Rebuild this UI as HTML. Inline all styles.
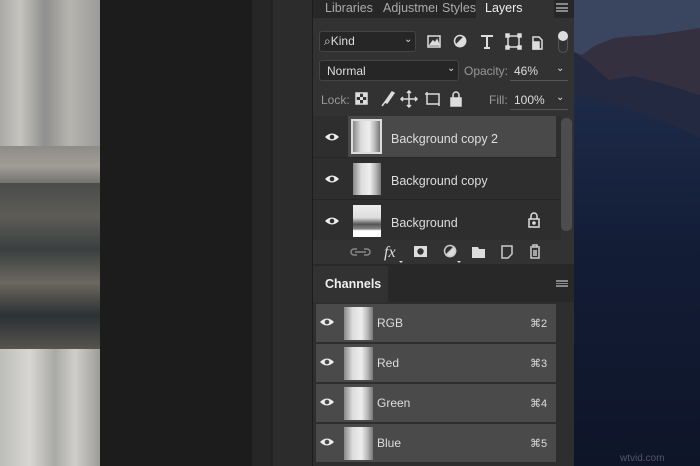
<!DOCTYPE html>
<html><head><meta charset="utf-8"><style>
*{margin:0;padding:0;box-sizing:border-box}
body{width:700px;height:466px;overflow:hidden;position:relative;background:#1c1c1c;font-family:"Liberation Sans",sans-serif;color:#ddd}
.a{position:absolute}
.t{font-size:12px;color:#ddd}
.thumb{position:absolute;background:linear-gradient(90deg,#888,#ddd 30%,#eee 60%,#bbb 80%,#777)}
.ch{position:absolute;left:316px;width:240px;height:38px;background:#4a4a4a}
.ch .t{position:absolute;left:61px;top:12px;font-size:12px}
.ch .k{position:absolute;left:214px;top:13px;font-size:11px;color:#ddd}
</style></head><body>
<div class="a" style="left:0;top:0;width:100px;height:146px;background:linear-gradient(90deg,#a9a9a5,#c6c4bf 20%,#8f8f8f 45%,#b7b5b0 70%,#9a9a98)"></div>
<div class="a" style="left:0;top:146px;width:100px;height:40px;background:linear-gradient(180deg,#8e8c88,#a09d96 50%,#6c6b67)"></div>
<div class="a" style="left:0;top:183px;width:100px;height:166px;background:linear-gradient(180deg,#4a4c4b 0,#5d5c57 20%,#3b3f40 40%,#6a675f 60%,#2c3133 80%,#55534e 100%)"></div>
<div class="a" style="left:0;top:349px;width:100px;height:117px;background:linear-gradient(90deg,#bdbdb9,#d7d6d2 30%,#a9a9a6 55%,#cfceca 75%,#9c9c99)"></div>
<div class="a" style="left:252px;top:0;width:18px;height:466px;background:#262626"></div>
<div class="a" style="left:270px;top:0;width:3px;height:466px;background:#222"></div>
<div class="a" style="left:273px;top:0;width:39px;height:466px;background:#2c2c2c"></div>
<div class="a" style="left:574px;top:0;width:126px;height:466px;background:#3a4660"></div>
<svg class="a" style="left:574px;top:0" width="126" height="466">
<defs><linearGradient id="g" x1="0" y1="0" x2="0" y2="1"><stop offset="0" stop-color="#1d2a48"/><stop offset="0.4" stop-color="#131d36"/><stop offset="1" stop-color="#0e1529"/></linearGradient></defs>
<path d="M0 52 L8 55 L20 46 L40 38 L60 36 L80 35 L100 32 L126 28 L126 140 L0 140Z" fill="#35303f"/>
<path d="M0 52 L12 60 L35 80 L60 76 L90 84 L126 95 L126 140 L0 140Z" fill="#222940"/>
<path d="M0 97 Q60 105 126 138 L126 466 L0 466Z" fill="url(#g)"/>
</svg>
<div class="a" style="left:620px;top:453px;font-size:10px;color:#556">wtvid.com</div>
<div class="a" style="left:312px;top:0;width:262px;height:466px;background:#323232;border-left:1px solid #1c1c1c"></div>
<div class="a" style="left:313px;top:0;width:261px;height:18px;background:#272727"></div>
<div class="a" style="left:476px;top:0;width:78px;height:18px;background:#323232"></div>
<div class="a t" style="left:325px;top:1px;font-size:12.5px;color:#aaa">Libraries</div>
<div class="a t" style="left:383px;top:1px;font-size:12.5px;color:#aaa;width:54px;overflow:hidden;white-space:nowrap">Adjustments</div>
<div class="a t" style="left:442px;top:1px;font-size:12.5px;color:#aaa">Styles</div>
<div class="a t" style="left:485px;top:1px;font-size:12.5px;color:#eee">Layers</div>
<div class="a" style="left:556px;top:3px;width:12px;height:9px;border-top:2px solid #888;border-bottom:2px solid #888"></div>
<div class="a" style="left:556px;top:7px;width:12px;height:2px;background:#888"></div>
<div class="a" style="left:319px;top:31px;width:97px;height:21px;background:#262626;border:1px solid #444;border-radius:3px"></div>
<div class="a t" style="left:324px;top:34px;font-size:12px">⌕Kind</div>
<div class="a t" style="left:404px;top:34px;font-size:10px">⌄</div>
<svg class="a" style="left:426px;top:33px" width="130" height="18" fill="none" stroke="#ddd" stroke-width="1.5">
<rect x="2" y="3" width="12" height="11"/><path d="M4 12 L7 8 L9 10 L11 7 L13 12Z" fill="#ddd"/>
<circle cx="34" cy="8" r="5.5"/><path d="M30 12 L38 4 A5.5 5.5 0 0 1 30 12Z" fill="#ddd"/>
<path d="M55 3 H67 M61 3 V15 M58 15 H64" stroke-width="2"/>
<rect x="82" y="3" width="11" height="11"/><rect x="80" y="1" width="3" height="3" fill="#ddd"/><rect x="92" y="1" width="3" height="3" fill="#ddd"/><rect x="80" y="13" width="3" height="3" fill="#ddd"/><rect x="92" y="13" width="3" height="3" fill="#ddd"/>
<path d="M107 4 H113 L116 7 V16 H107Z"/><rect x="107" y="9" width="6" height="7" fill="#ddd"/>
</svg>
<div class="a" style="left:558px;top:31px;width:10px;height:22px;border:1px solid #555;border-radius:5px"></div>
<div class="a" style="left:558px;top:31px;width:10px;height:10px;background:#ddd;border-radius:50%"></div>
<div class="a" style="left:319px;top:60px;width:140px;height:21px;background:#262626;border:1px solid #444;border-radius:3px"></div>
<div class="a t" style="left:327px;top:64px">Normal</div>
<div class="a t" style="left:447px;top:63px;font-size:10px">⌄</div>
<div class="a t" style="left:464px;top:64px;color:#999">Opacity:</div>
<div class="a t" style="left:514px;top:64px">46%</div>
<div class="a" style="left:510px;top:80px;width:58px;height:1px;background:#555"></div>
<div class="a t" style="left:556px;top:63px;font-size:10px">⌄</div>
<div class="a t" style="left:321px;top:93px;color:#999">Lock:</div>
<svg class="a" style="left:354px;top:90px" width="115" height="18" fill="none" stroke="#ddd" stroke-width="1.5">
<rect x="2" y="3" width="11" height="11"/><path d="M2 3h4v4H2zM9 3h4v4H9zM6 7h3v3H6zM2 10h4v4H2zM9 10h4v4H9z" fill="#ddd" stroke="none"/>
<path d="M28 16 L31 12 M31 12 L38 2 L40 3 L33 13Z" fill="#ddd"/>
<path d="M55 1 V17 M47 9 H63 M53 3 L55 1 L57 3 M53 15 L55 17 L57 15 M49 7 L47 9 L49 11 M61 7 L63 9 L61 11"/>
<path d="M73 4 H85 V14 H73Z M71 4 H75 M85 12 V16 M73 2 V6" />
<rect x="97" y="8" width="10" height="8" fill="#ddd"/><path d="M99 8 V5 A3 3 0 0 1 105 5 V8"/>
</svg>
<div class="a t" style="left:489px;top:93px;color:#999">Fill:</div>
<div class="a t" style="left:514px;top:93px">100%</div>
<div class="a" style="left:510px;top:109px;width:58px;height:1px;background:#555"></div>
<div class="a t" style="left:556px;top:92px;font-size:10px">⌄</div>
<div class="a" style="left:313px;top:116px;width:248px;height:124px;background:#2e2e2e"></div>
<div class="a" style="left:348px;top:116px;width:208px;height:41px;background:#494949"></div>
<div class="a" style="left:313px;top:157px;width:248px;height:1px;background:#262626"></div>
<div class="a" style="left:313px;top:199px;width:248px;height:1px;background:#262626"></div>
<div class="a" style="left:561px;top:118px;width:11px;height:113px;background:#4d4d4d;border-radius:5px"></div>
<div class="thumb" style="left:351px;top:119px;width:31px;height:35px;border:2px solid #ddd"></div>
<div class="thumb" style="left:353px;top:163px;width:28px;height:32px"></div>
<div class="a" style="left:353px;top:205px;width:28px;height:32px;background:linear-gradient(180deg,#eee 0,#ddd 40%,#555 60%,#888 75%,#fff 80%)"></div>
<div class="a t" style="left:391px;top:132px;font-size:12.5px">Background copy 2</div>
<div class="a t" style="left:391px;top:174px;font-size:12.5px">Background copy</div>
<div class="a t" style="left:391px;top:216px;font-size:12.5px">Background</div>
<svg class="a" style="left:527px;top:212px" width="14" height="16" fill="none" stroke="#ddd" stroke-width="1.5"><rect x="2" y="7" width="10" height="8"/><path d="M4 7 V4 A3 3 0 0 1 10 4 V7"/><circle cx="7" cy="11" r="1" fill="#ddd"/></svg>
<svg class="a" style="left:320px;top:0" width="30" height="466" fill="#eee">
<path d="M5 137 Q12 130 19 137 Q12 144 5 137Z"/><circle cx="12" cy="137" r="2.3" fill="#2e2e2e"/>
<path d="M5 179 Q12 172 19 179 Q12 186 5 179Z"/><circle cx="12" cy="179" r="2.3" fill="#2e2e2e"/>
<path d="M5 221 Q12 214 19 221 Q12 228 5 221Z"/><circle cx="12" cy="221" r="2.3" fill="#2e2e2e"/>
</svg>
<div class="a" style="left:313px;top:240px;width:261px;height:22px;background:#323232"></div>
<svg class="a" style="left:350px;top:242px" width="200" height="22" fill="none" stroke="#ccc" stroke-width="1.5">
<path d="M5 10 H16 M7 7 H4 A3 3 0 0 0 4 13 H7 M14 7 H17 A3 3 0 0 1 17 13 H14" stroke="#888"/>
<text x="34" y="15" font-family="Liberation Serif" font-style="italic" font-size="16" fill="#ddd" stroke="none">fx</text>
<path d="M49 19 h4 l-2 2z" fill="#ddd" stroke="none"/>
<rect x="64" y="4" width="13" height="11" fill="#ddd" stroke="none"/><circle cx="70.5" cy="9.5" r="3.2" fill="#323232" stroke="none"/>
<circle cx="100" cy="9" r="5.5"/><path d="M96 13 L104 5 A5.5 5.5 0 0 1 96 13Z" fill="#ddd"/>
<path d="M107 19 h4 l-2 2z" fill="#ddd" stroke="none"/>
<path d="M122 5 H128 L129 7 H135 V16 H122Z" fill="#ddd" stroke="none"/>
<path d="M152 4 H162 V12 L158 16 H152Z"/>
<path d="M180 5 H190 M183 5 V3 H187 V5 M181 6 V16 H189 V6 M184 8 V14 M186 8 V14"/>
</svg>
<div class="a" style="left:313px;top:264px;width:261px;height:38px;background:#282828"></div>
<div class="a" style="left:313px;top:266px;width:75px;height:36px;background:#323232"></div>
<div class="a t" style="left:325px;top:277px;font-size:12.5px;font-weight:bold;color:#eee">Channels</div>
<div class="a" style="left:556px;top:280px;width:12px;height:7px;border-top:2px solid #888;border-bottom:2px solid #888"></div>
<div class="a" style="left:556px;top:283px;width:12px;height:1px;background:#888"></div>
<div class="a" style="left:313px;top:302px;width:261px;height:164px;background:#2e2e2e"></div>
<div class="ch" style="top:304px"><div class="thumb" style="left:28px;top:3px;width:29px;height:33px"></div><div class="t">RGB</div><div class="k">⌘2</div></div>
<div class="ch" style="top:344px"><div class="thumb" style="left:28px;top:3px;width:29px;height:33px"></div><div class="t">Red</div><div class="k">⌘3</div></div>
<div class="ch" style="top:384px"><div class="thumb" style="left:28px;top:3px;width:29px;height:33px"></div><div class="t">Green</div><div class="k">⌘4</div></div>
<div class="ch" style="top:424px"><div class="thumb" style="left:28px;top:3px;width:29px;height:33px"></div><div class="t">Blue</div><div class="k">⌘5</div></div>
<svg class="a" style="left:318px;top:300px" width="20" height="166" fill="#eee">
<path d="M2 22 Q9 15 16 22 Q9 29 2 22Z"/><circle cx="9" cy="22" r="2.3" fill="#4a4a4a"/>
<path d="M2 62 Q9 55 16 62 Q9 69 2 62Z"/><circle cx="9" cy="62" r="2.3" fill="#4a4a4a"/>
<path d="M2 102 Q9 95 16 102 Q9 109 2 102Z"/><circle cx="9" cy="102" r="2.3" fill="#4a4a4a"/>
<path d="M2 142 Q9 135 16 142 Q9 149 2 142Z"/><circle cx="9" cy="142" r="2.3" fill="#4a4a4a"/>
</svg>
</body></html>
